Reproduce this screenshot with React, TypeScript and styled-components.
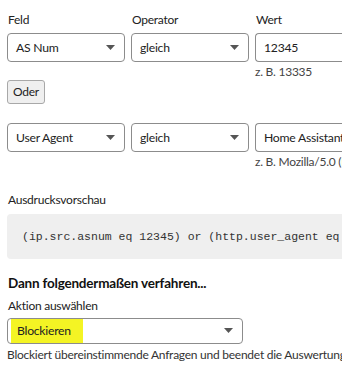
import React from "react"
import styled, { createGlobalStyle } from "styled-components"

const GlobalStyle = createGlobalStyle`
    body {
        margin: 0;
        background: #ffffff;
        overflow: hidden;
        font-family: Lato, "Noto Sans", sans-serif;
        letter-spacing: -0.25px;
        color: #222;
    }
`

const Page = styled.div`
    width: 440px;
    padding: 12px 0 0 7px;
    display: flex;
    flex-direction: column;
`

const ConditionRow = styled.div<{ $top?: number }>`
    display: grid;
    grid-template-columns: 118px 118px 150px;
    column-gap: 6px;
    margin-top: ${props => props.$top ?? 0}px;
`

const Field = styled.div`
    display: flex;
    flex-direction: column;
`

const Label = styled.label`
    font-size: 12px;
    line-height: 16px;
    height: 16px;
    margin: 0 0 5px 1px;
    color: #222;
`

const SelectBox = styled.div<{ $width?: number; $height?: number }>`
    box-sizing: border-box;
    width: ${props => props.$width ? props.$width + 'px' : '100%'};
    height: ${props => props.$height ?? 29}px;
    border: 1px solid #8c8c8c;
    border-radius: 4px;
    display: flex;
    align-items: center;
    justify-content: space-between;
    padding: 0 9px 0 8px;
    font-size: 12.2px;
    color: #222;
    background: #fff;
`

const InputBox = styled(SelectBox)`
    border-right: none;
    border-top-right-radius: 0;
    border-bottom-right-radius: 0;
`

const Caret = () => (
    <svg width="9" height="5" viewBox="0 0 9 5">
        <path d="M0 0h9L4.5 5z" fill="#555" />
    </svg>
)

const Hint = styled.span`
    font-size: 12px;
    line-height: 16px;
    color: #444;
    margin-top: 2px;
    white-space: nowrap;
`

const Spacer = styled.div`
    height: 12px;
`

const OrButton = styled.button`
    box-sizing: border-box;
    width: 38px;
    height: 24px;
    margin-top: -2px;
    border: 1px solid #a8a8a8;
    border-radius: 3px;
    background: #efefef;
    font-family: inherit;
    letter-spacing: inherit;
    font-size: 12px;
    color: #222;
    padding: 0;
`

const SectionLabel = styled.div<{ $top: number }>`
    font-size: 12px;
    line-height: 16px;
    margin-top: ${props => props.$top}px;
    margin-left: 1px;
    color: #222;
`

const Preview = styled.pre`
    box-sizing: border-box;
    margin: 6px 0 0 0;
    height: 45px;
    width: 430px;
    background: #efefef;
    border-radius: 4px;
    padding: 0 0 0 15px;
    display: flex;
    align-items: center;
    font-family: "Liberation Mono", "DejaVu Sans Mono", monospace;
    letter-spacing: 0;
    font-size: 11.5px;
    color: #333;
    white-space: pre;
`

const Heading = styled.h3`
    margin: 15px 0 0 1px;
    font-size: 13.5px;
    line-height: 18px;
    font-weight: 700;
    letter-spacing: -0.2px;
    color: #111;
`

const Highlight = styled.span`
    background: #f4f424;
    margin-left: -5px;
    padding: 0 12px 0 6px;
    height: 24px;
    display: flex;
    align-items: center;
`

const HelpText = styled.div`
    font-size: 12px;
    line-height: 16px;
    margin-top: 3px;
    color: #333;
    white-space: nowrap;
`

export default function App() {
    return (
        <>
            <GlobalStyle />
            <Page>
                <ConditionRow>
                    <Field>
                        <Label>Feld</Label>
                        <SelectBox>AS Num<Caret /></SelectBox>
                    </Field>
                    <Field>
                        <Label>Operator</Label>
                        <SelectBox>gleich<Caret /></SelectBox>
                    </Field>
                    <Field>
                        <Label>Wert</Label>
                        <InputBox>12345</InputBox>
                        <Hint>z. B. 13335</Hint>
                    </Field>
                </ConditionRow>
                <div>
                    <OrButton>Oder</OrButton>
                </div>
                <ConditionRow $top={19}>
                    <Field>
                        <SelectBox>User Agent<Caret /></SelectBox>
                    </Field>
                    <Field>
                        <SelectBox>gleich<Caret /></SelectBox>
                    </Field>
                    <Field>
                        <InputBox>Home Assistant</InputBox>
                        <Hint>z. B. Mozilla/5.0 (Macintosh)</Hint>
                    </Field>
                </ConditionRow>
                <Spacer />
                <SectionLabel $top={10}>Ausdrucksvorschau</SectionLabel>
                <Preview>(ip.src.asnum eq 12345) or (http.user_agent eq "Home Assistant")</Preview>
                <Heading>Dann folgendermaßen verfahren...</Heading>
                <SectionLabel $top={6}>Aktion auswählen</SectionLabel>
                <SelectBox $width={236} $height={26} style={{ marginTop: 4 }}>
                    <Highlight>Blockieren</Highlight>
                    <Caret />
                </SelectBox>
                <HelpText>Blockiert übereinstimmende Anfragen und beendet die Auswertung anderer Regeln</HelpText>
            </Page>
        </>
    )
}
